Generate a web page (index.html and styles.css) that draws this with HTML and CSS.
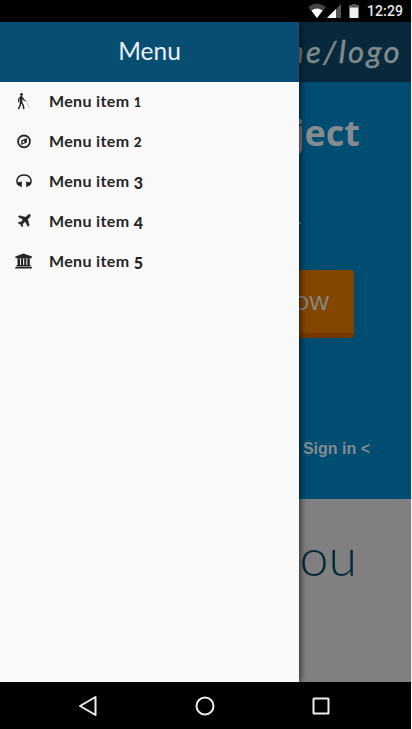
FILE: index.html
```html
<!DOCTYPE html>
<html lang="en">
<head>
<meta charset="utf-8">
<meta name="viewport" content="width=device-width">
<title>Menu</title>
<link rel="stylesheet" href="styles.css">
</head>
<body>
<div class="phone">
  <div class="status">
    <svg class="signals" width="54" height="16" viewBox="0 0 54 16">
      <path d="M0 4Q9-3 18 4L9 15Z" fill="#444"/>
      <path d="M3.400 7.400Q9 3.600 14.600 7.400L9 15Z" fill="#fff"/>
      <path d="M33 1V15H19Z" fill="#555"/>
      <path d="M28 6V15H19Z" fill="#fff"/>
      <path d="M44 1h4v1.500h2.500V15h-9V2.500h2.500Z" fill="#eee"/>
      <path d="M44 1h4v1.500h2.500V4.500h-9V2.500h2.500Z" fill="#555"/>
    </svg>
    <span class="clock">12:29</span>
  </div>
  <main class="screen">
    <header class="brand"><span>me/logo</span></header>
    <section class="hero">
      <h1>Project</h1>
      <p class="tagline">.</p>
      <div class="cta">NOW</div>
      <div class="signin">Sign in &lt;</div>
    </section>
    <section class="about"><h2>you</h2></section>
    <aside class="drawer">
      <div class="title">Menu</div>
      <ul>
        <li>
          <svg viewBox="0 0 18 18"><g fill="none" stroke="#252525" stroke-linecap="round" stroke-linejoin="round"><circle cx="6.500" cy="2.500" r="1.100" fill="#252525"/><path d="M6.300 5.200L6 10.500" stroke-width="2.600"/><path d="M5.600 5L3.600 7.300V9.600M7.200 5.500L8.700 7.700L10.600 8.700" stroke-width="1.200"/><path d="M5.600 10.500L5.100 13.500L3.700 16.500M6.600 10.500L8.200 13.300L8.800 16.500" stroke-width="1.500"/><path d="M10.600 8.700L14.800 16" stroke="#aaa" stroke-width=".6"/></g></svg>
          <span>Menu item <b class="low">1</b></span>
        </li>
        <li>
          <svg viewBox="0 0 18 18"><circle cx="9" cy="9.400" r="5.900" fill="none" stroke="#252525" stroke-width="1.800"/><path fill="#252525" fill-rule="evenodd" d="M11.900 6V10.600L6.200 13V8.600ZM7.500 9.400V11.200L9.300 10.400V8.500Z"/></svg>
          <span>Menu item <b class="low two">2</b></span>
        </li>
        <li>
          <svg viewBox="0 0 18 18"><path d="M3 12.500C.2 7.300 3.600 3.100 9 3.100S17.800 7.300 15 12.500" fill="none" stroke="#252525" stroke-width="1.500"/><path d="M6.800 9.300V15H5.900V14.400L3.100 13.500 2.200 11.800 3.600 10 5.900 9.900V9.300ZM11.200 9.300V15H12.100V14.400L14.900 13.500 15.800 11.800 14.400 10 12.100 9.900V9.300Z" fill="#252525"/></svg>
          <span>Menu item <b class="drop">3</b></span>
        </li>
        <li>
          <svg viewBox="0 0 18 18"><path fill="#252525" stroke="#252525" stroke-width=".5" d="M15.200 2.600C14.300 2.200 13.200 2.700 12.500 3.400L10.600 5.200 4.500 3.700 3.300 4.800 8.200 7.600 5.800 10.300 3.900 10 3 10.900 5.500 12.300 7 14.900 7.900 14 7.500 12 10.200 9.600 13 14.500 14.200 13.300 12.600 7.200 14.400 5.400C15.200 4.600 15.600 3.500 15.200 2.600Z"/></svg>
          <span>Menu item <b class="drop">4</b></span>
        </li>
        <li>
          <svg viewBox="0 0 18 18"><path fill="#252525" d="M8.600 1.500L17 4.600V5.700H15.800V6.400H1.600V5.700H.3V4.600ZM2.500 6.800H5V13H6V6.800H8.100V13H9.200V6.800H11.300V13H12.300V6.800H14.800V13H15.600V14.200H1.600V13H2.500ZM.9 14.700H16.400L17 15.500V16.600H.2V15.500Z"/></svg>
          <span>Menu item <b class="drop">5</b></span>
        </li>
      </ul>
    </aside>
  </main>
  <nav class="system">
    <svg viewBox="0 0 24 24"><path d="M18.500 3V21L3 12Z"/></svg>
    <svg viewBox="0 0 24 24"><circle cx="12" cy="12" r="8.500"/></svg>
    <svg viewBox="0 0 24 24"><rect x="4.500" y="4.500" width="15" height="15" rx=".5"/></svg>
  </nav>
</div>
</body>
</html>
```

FILE: styles.css
```css
* { box-sizing: border-box; }
body { margin: 0; background: #f4f4f4; font-family: Lato, sans-serif; }
h1, h2, p, ul { margin: 0; padding: 0; font-weight: normal; }
.phone { width: 411px; height: 729px; display: flex; flex-direction: column; background: #000; overflow: hidden; }
.status { height: 22px; flex: none; display: flex; justify-content: flex-end; align-items: center; padding-right: 8px; gap: 5px; background: #000; }
.signals { margin-top: -1px; }
.clock { width: 36px; font: 500 14px/20px Roboto, sans-serif; letter-spacing: .1px; color: #e8e8e8; white-space: nowrap; }
.screen { position: relative; height: 660px; flex: none; display: flex; flex-direction: column; background: #808080; overflow: hidden; text-align: right; }
.brand { height: 60px; flex: none; background: #07293b; color: #818a8d; padding: 4px 9px 0 0; font: italic 31px/50px Lato, sans-serif; letter-spacing: 2.4px; -webkit-text-stroke: .4px #818a8d; }
.hero { height: 417px; flex: none; background: #004d72; display: flex; flex-direction: column; align-items: flex-end; color: #858b8e; }
h1 { margin: 27px 51px 0 0; font: bold 36px/48px "Open Sans", sans-serif; }
.tagline { height: 30px; margin: 46px 109px 0 0; font: 16px/30px Lato, sans-serif; }
.cta { width: 190px; height: 68px; margin: 37px 57px 0 0; padding-right: 25px; border-radius: 4px; border-bottom: 5px solid #763700; background: #834600; font: 21px/66px "Liberation Sans", sans-serif; }
.signin { margin: 99px 41px 0 0; font: bold 16px/24px "Liberation Sans", sans-serif; }
.about { padding: 23px 54px 0 0; color: #08293a; }
h2 { font: 300 52px/68px Lato, sans-serif; letter-spacing: 0; }
.drawer { position: absolute; inset: 0 auto 0 0; width: 299px; background: #f9f9f9; box-shadow: 1px 0 7px rgba(0, 0, 0, .75); text-align: left; }
.title { height: 60px; background: #084e72; color: #e9f1f5; text-align: center; font: 24.5px/58px Lato, sans-serif; }
ul { list-style: none; }
li { height: 40px; padding: 0 0 2px 15px; display: flex; align-items: center; gap: 16px; color: #252525; font: bold 16px/20px Lato, sans-serif; letter-spacing: .35px; white-space: nowrap; }
li svg { width: 18px; height: 18px; flex: none; }
b { display: inline-block; line-height: 16px; }
.low { font-size: 13px; }
.two { font-size: 13.5px; }
.drop { transform: translateY(2px); }
.system { flex: 1; display: flex; justify-content: center; align-items: center; gap: 92px; padding-right: 1px; background: #000; }
.system svg { width: 24px; height: 24px; fill: none; stroke: #eee; stroke-width: 2; stroke-linejoin: round; }
```
